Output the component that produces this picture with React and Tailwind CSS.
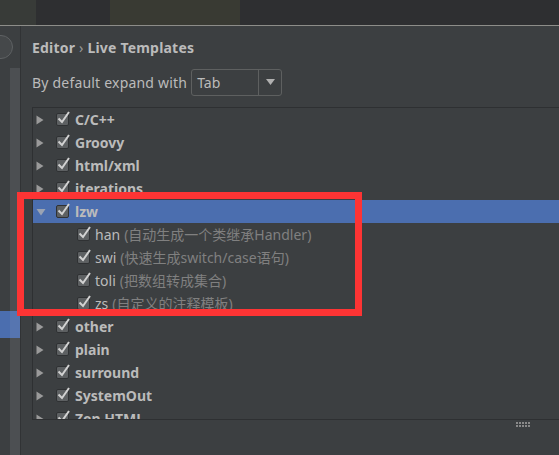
import React from "react";

const font = { fontFamily: '"Noto Sans", "Noto Sans CJK SC", sans-serif' };

function Arrow({ open }) {
  if (open) {
    return (
      <svg width="10" height="8" viewBox="0 0 10 8" className="shrink-0">
        <path d="M0.5 1 L9.5 1 L5 7.5 Z" fill="#9aa3b3" />
      </svg>
    );
  }
  return (
    <svg width="8" height="10" viewBox="0 0 8 10" className="shrink-0">
      <path d="M0.5 0.5 L7.5 5 L0.5 9.5 Z" fill="#9a9a9a" />
    </svg>
  );
}

function Check() {
  return (
    <div className="relative w-[13px] h-[13px] shrink-0 rounded-[2px] bg-[#5d6062] border border-[#2f3133]">
      <svg width="15" height="15" viewBox="0 0 15 15" className="absolute -top-[4px] -left-[1px]">
        <path d="M2.5 8.5 L6 12 L13 2" fill="none" stroke="#d2d2d2" strokeWidth="2" />
      </svg>
    </div>
  );
}

const groups = [
  { name: "C/C++" },
  { name: "Groovy" },
  { name: "html/xml" },
  { name: "iterations" },
  {
    name: "lzw",
    open: true,
    children: [
      ["han", "(自动生成一个类继承Handler)"],
      ["swi", "(快速生成switch/case语句)"],
      ["toli", "(把数组转成集合)"],
      ["zs", "(自定义的注释模板)"],
    ],
  },
  { name: "other" },
  { name: "plain" },
  { name: "surround" },
  { name: "SystemOut" },
  { name: "Zen HTML" },
];

export default function App() {
  return (
    <div
      className="relative w-[559px] h-[455px] overflow-hidden bg-[#3c3f41] flex flex-col text-[#bbbbbb]"
      style={font}
    >
      {/* blurred window behind the dialog */}
      <div className="h-[25px] flex bg-[#2e2f31] shrink-0">
        <div className="w-[36px] bg-[#383b38]" />
        <div className="w-[74px]" />
        <div className="w-[130px] bg-[#393a33]" />
        <div className="flex-1" />
      </div>
      <div className="h-px bg-[#8d8d89] shrink-0" />

      <div className="flex flex-1 min-h-0">
        {/* settings sidebar edge */}
        <div className="w-[20px] shrink-0 flex flex-col">
          <div className="h-[42px] relative">
            <div className="absolute left-[-12px] top-[9px] w-[25px] h-[24px] rounded-full border border-[#5e6163] bg-[#45484a]" />
          </div>
          <div className="flex-1 flex">
            <div className="w-[10px] flex flex-col">
              <div className="h-[243px]" />
              <div className="h-[27px] bg-[#4b6eaf]" />
            </div>
            <div className="w-[10px] bg-[#4c4f52] flex flex-col">
              <div className="h-[243px]" />
              <div className="h-[27px] bg-[#5675b0]" />
            </div>
          </div>
        </div>
        <div className="w-px bg-[#313335] shrink-0" />

        {/* main panel */}
        <div className="flex-1 flex flex-col pl-[11px]">
          <div className="pt-[13px] h-[42px] text-[14px] leading-[18px] font-bold text-[#bbbbbb] tracking-[0.2px]">
            Editor <span className="font-normal text-[#9a9a9a]">›</span> Live Templates
          </div>
          <div className="flex items-center gap-[4px] h-[28px]">
            <span className="text-[14px] tracking-[0.2px]">By default expand with</span>
            <div className="flex h-[27px] w-[91px] border border-[#5e6060] rounded-[3px]">
              <span className="flex-1 pl-[5px] text-[14px] leading-[25px]">Tab</span>
              <div className="w-px bg-[#5e6060]" />
              <div className="w-[22px] flex items-center justify-center">
                <svg width="9" height="6" viewBox="0 0 9 6">
                  <path d="M0 0 L9 0 L4.5 6 Z" fill="#b0b0b0" />
                </svg>
              </div>
            </div>
          </div>

          <div className="mt-[11px] h-[313px] border-t border-l border-b border-[#2e3032] overflow-hidden">
            {groups.map((g) => (
              <React.Fragment key={g.name}>
                <div
                  className={
                    "h-[23px] flex items-center pl-[3px] " +
                    (g.open ? "bg-[#4b6eaf]" : "")
                  }
                >
                  <div className="w-[10px] flex justify-start">
                    <Arrow open={g.open} />
                  </div>
                  <div className="w-[10px]" />
                  <Check />
                  <span className="ml-[6px] text-[14px] font-bold text-[#bbbbbb]">{g.name}</span>
                </div>
                {g.children &&
                  g.children.map(([n, d]) => (
                    <div key={n} className="h-[23px] flex items-center pl-[44px]">
                      <Check />
                      <span className="ml-[5px] text-[14px] text-[#bbbbbb]">{n}</span>
                      <span className="ml-[4px] text-[14px] text-[#808080]">{d}</span>
                    </div>
                  ))}
              </React.Fragment>
            ))}
          </div>

          <div className="flex-1 relative">
            <div className="absolute right-[29px] top-[2px] grid grid-cols-5 gap-x-[1px] gap-y-[1px]">
              {Array.from({ length: 10 }).map((_, i) => (
                <div key={i} className="w-[2px] h-[2px] bg-[#8a8a8a]" />
              ))}
            </div>
          </div>
        </div>
      </div>

      {/* red annotation box */}
      <div className="absolute left-[17px] top-[192px] w-[345px] h-[124px] border-[7px] border-[#fd3434]" />
    </div>
  );
}
